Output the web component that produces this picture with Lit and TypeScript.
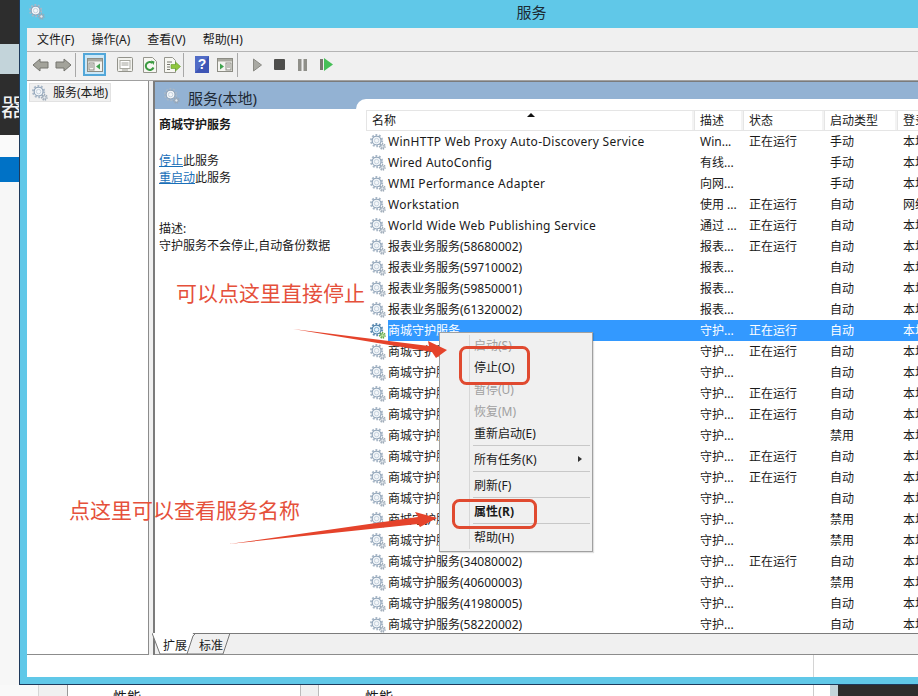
import { LitElement, html, css, svg } from "lit";
import { customElement } from "lit/decorators.js";

const gear = (active = false) => html`<svg class="gear" width="16" height="16" viewBox="0 0 16 16">
  <circle cx="6.6" cy="6.6" r="5.6" fill="none" stroke="${active ? "#5f8fb5" : "#a9b8c8"}" stroke-width="2" stroke-dasharray="1.9 1.6"></circle>
  <circle cx="6.6" cy="6.6" r="4.4" fill="${active ? "#e6f3fb" : "#f3f6f9"}" stroke="${active ? "#4d7ea6" : "#8fa3b8"}" stroke-width="1.1"></circle>
  <circle cx="6.6" cy="6.6" r="2.2" fill="none" stroke="${active ? "#7fb2d6" : "#c6d2de"}" stroke-width="1"></circle>
  <circle cx="12.4" cy="12.4" r="2.6" fill="none" stroke="${active ? "#5aa83c" : "#9aa8b6"}" stroke-width="1.6" stroke-dasharray="1.3 1"></circle>
  <circle cx="12.4" cy="12.4" r="1.6" fill="${active ? "#bfe3a8" : "#e4e9ee"}" stroke="${active ? "#5aa83c" : "#8d9baa"}" stroke-width=".7"></circle>
</svg>`;

const win = (inner: unknown) => html`<svg width="16" height="16" viewBox="0 0 16 16">
  <rect x=".5" y="1.5" width="15" height="13" fill="#f4f4f0" stroke="#8c8c84"></rect>
  <rect x="1" y="2" width="14" height="2.5" fill="#a9a9a0"></rect>
  ${inner}
</svg>`;

const icons: Record<string, unknown> = {
  back: html`<svg width="17" height="16" viewBox="0 0 17 16"><path d="M1 8 8 2v3h8v6H8v3z" fill="#a3a39b" stroke="#75756f"></path></svg>`,
  fwd: html`<svg width="17" height="16" viewBox="0 0 17 16"><path d="M16 8 9 2v3H1v6h8v3z" fill="#a3a39b" stroke="#75756f"></path></svg>`,
  view: win(svg`<rect x="2" y="6" width="5" height="7" fill="none" stroke="#8c8c84"></rect><path d="M3 8h3M3 10h3" stroke="#8c8c84"></path><path d="M13 6.5v6L9 9.5z" fill="#3fa34d"></path>`),
  doc: html`<svg width="16" height="16" viewBox="0 0 16 16"><rect x=".5" y=".5" width="15" height="14" rx="1" fill="#f2f2ee" stroke="#93938b"></rect><rect x="3" y="3.5" width="10" height="8" fill="#fff" stroke="#a9a9a1"></rect><path d="M4.5 6h7M4.5 8h7M5 13h6" stroke="#a0a098"></path></svg>`,
  refresh: html`<svg width="16" height="16" viewBox="0 0 16 16"><path d="M1.500.5h9l4 4v11h-13z" fill="#f7f7f2" stroke="#96968e"></path><path d="M11.500 10.500a4 4 0 1 1-1-4.500" fill="none" stroke="#3b9a41" stroke-width="2"></path><path d="M9 3.500l3.500 1-1 3.500z" fill="#3b9a41"></path></svg>`,
  export: html`<svg width="18" height="16" viewBox="0 0 18 16"><path d="M1.500.5h8l3 3v12h-11z" fill="#f7f7f2" stroke="#96968e"></path><path d="M4 5h5M4 7.500h3M4 10h3M4 12.500h3" stroke="#77776f"></path><path d="M8 7.500h4.500V5l5 4.500-5 4.500v-2.500H8z" fill="#8fc63d" stroke="#5f9a2a" stroke-width=".6"></path></svg>`,
  help: html`<svg width="14" height="17" viewBox="0 0 14 17"><rect width="14" height="17" fill="#3e55b5"></rect><path d="M0 0h14L0 17z" fill="#5f7bd2" opacity=".6"></path><text x="7" y="13" text-anchor="middle" fill="#fff" font-size="14" font-weight="700" font-family="Liberation Sans">?</text></svg>`,
  panel: win(svg`<rect x="9" y="6" width="5" height="7" fill="none" stroke="#8c8c84"></rect><path d="M10 8h3M10 10h3" stroke="#8c8c84"></path><path d="M3 6.500v6l4-3z" fill="#3fa34d"></path>`),
  play: html`<svg width="9" height="14" viewBox="0 0 9 14"><path d="M.5 1v12L8.500 7z" fill="#a9a9a3" stroke="#8a8a84"></path></svg>`,
  stop: html`<svg width="11" height="11" viewBox="0 0 11 11"><rect width="11" height="11" rx="1" fill="#4e4e4c"></rect></svg>`,
  pause: html`<svg width="9" height="12" viewBox="0 0 9 12"><rect width="3.500" height="12" fill="#8f8f89"></rect><rect x="5.500" width="3.500" height="12" fill="#8f8f89"></rect></svg>`,
  resume: html`<svg width="13" height="13" viewBox="0 0 13 13"><rect y="1" width="3" height="11" fill="#77776f"></rect><path d="M4 0v13l9-6.500z" fill="#46bf57"></path></svg>`,
};

type Row = [string, string, string, string, string];
const svc = "商城守护服务";
const rows: Row[] = [
  ["WinHTTP Web Proxy Auto-Discovery Service", "Win...", "正在运行", "手动", "本地服务"],
  ["Wired AutoConfig", "有线...", "", "手动", "本地系统"],
  ["WMI Performance Adapter", "向网...", "", "手动", "本地系统"],
  ["Workstation", "使用 ...", "正在运行", "自动", "网络服务"],
  ["World Wide Web Publishing Service", "通过 ...", "正在运行", "自动", "本地系统"],
  ["报表业务服务(58680002)", "报表...", "正在运行", "自动", "本地系统"],
  ["报表业务服务(59710002)", "报表...", "", "自动", "本地系统"],
  ["报表业务服务(59850001)", "报表...", "", "自动", "本地系统"],
  ["报表业务服务(61320002)", "报表...", "", "自动", "本地系统"],
  [svc, "守护...", "正在运行", "自动", "本地系统"],
  [svc, "守护...", "正在运行", "自动", "本地系统"],
  [svc, "守护...", "", "自动", "本地系统"],
  [svc, "守护...", "正在运行", "自动", "本地系统"],
  [svc, "守护...", "正在运行", "自动", "本地系统"],
  [svc, "守护...", "", "禁用", "本地系统"],
  [svc, "守护...", "正在运行", "自动", "本地系统"],
  [svc, "守护...", "正在运行", "自动", "本地系统"],
  [svc, "守护...", "", "自动", "本地系统"],
  [svc, "守护...", "", "禁用", "本地系统"],
  [svc, "守护...", "", "禁用", "本地系统"],
  ["商城守护服务(34080002)", "守护...", "正在运行", "自动", "本地系统"],
  ["商城守护服务(40600003)", "守护...", "", "禁用", "本地系统"],
  ["商城守护服务(41980005)", "守护...", "", "自动", "本地系统"],
  ["商城守护服务(58220002)", "守护...", "", "自动", "本地系统"],
];

@customElement("app-root")
export class AppRoot extends LitElement {
  static styles = css`
    :host {
      display: block;
      width: 918px;
      height: 696px;
      position: relative;
      overflow: hidden;
      background: #f7f7f7;
      font: 12px/1.2 "Noto Sans", "Noto Sans CJK SC", sans-serif;
      color: #1a1a1a;
    }
    .top { display: flex; height: 685px; }
    .strip { width: 19px; flex: none; display: flex; flex-direction: column; overflow: hidden; background: #f7f7f7; }
    .s-dark { height: 44px; background: #2d2d2d; }
    .s-light { height: 30px; background: #c3d4da; }
    .s-word { height: 61px; background: #2d2d2d; color: #f2f2f2; font-size: 24px; line-height: 66px; padding-left: 1px; white-space: nowrap; }
    .s-white { height: 22px; background: #fafafa; }
    .s-blue { height: 25px; background: #0072c6; }
    .window {
      width: 899px; flex: none; display: flex; flex-direction: column;
      background: #60c8e8; border-left: 1px solid #1e3a5c; border-bottom: 1px solid #1e3a5c;
      padding: 0 0 7px 7px; overflow: hidden;
    }
    .title { height: 28px; box-sizing: border-box; flex: none; position: relative; display: flex; align-items: center; justify-content: center; margin-left: -7px; padding: 0 0 5px 117px; font-size: 15px; color: #1c2b33; }
    .title .gear { position: absolute; left: 9px; top: 4px; }
    .menu { height: 23px; box-sizing: content-box; flex: none; background: #f0f0f0; display: flex; align-items: center; padding-left: 10px; gap: 17px; border-bottom: 1px solid #b4b4b4; }
    .menu span { white-space: nowrap; margin-top: 2px; }
    .toolbar { height: 29px; box-sizing: border-box; flex: none; background: #f0f0f0; display: flex; align-items: center; padding: 0 0 3px 2px; border-bottom: 1px solid #a0a0a0; }
    .btn { width: 23px; height: 23px; flex: none; display: flex; align-items: center; justify-content: center; box-sizing: border-box; }
    .btn.on { background: #cde8f7; border: 2px solid #52a7d9; }
    .sep { width: 1px; height: 24px; background: #a8a8a8; flex: none; }
    .ml7 { margin-left: 7px; } .ml8 { margin-left: 8px; } .ml2 { margin-left: 2px; } .mln1 { margin-left: -1px; } .ml6 { margin-left: 6px; } .ml1 { margin-left: 1px; }
    .main { flex: 1; min-height: 0; display: flex; background: #f0f0f0; }
    .tree { flex: none; background: #fff; border-right: 1px solid #8c8c8c; border-bottom: 1px solid #8c8c8c; padding: 2px; box-sizing: border-box; width: 122px; }
    .tree-item { display: flex; align-items: center; gap: 5px; width: 82px; height: 19px; box-sizing: border-box; padding-left: 2px; background: #f0f0f0; border: 1px solid #e2e2e2; white-space: nowrap; }
    .tree-item span { margin-top: 2px; }
    .right { flex: 1; min-width: 0; margin-left: 4px; display: flex; flex-direction: column; border-left: 2px solid #7b7b7b; border-top: 1px solid #7b7b7b; }
    .rhead { height: 27px; flex: none; background: #93b2d3; display: flex; align-items: center; gap: 8px; padding-left: 9px; font-size: 15px; color: #1f2a36; }
    .rhead span { margin-top: 4px; }
    .rbody { flex: 1; min-height: 0; display: flex; background: #fff; }
    .desc { width: 201px; flex: none; padding: 7px 0 0 4px; box-sizing: border-box; line-height: 17px; }
    .desc b { display: block; font-weight: 700; margin-bottom: 19px; line-height: 17px; }
    .desc a { color: #1a6fb8; text-decoration: underline; }
    .desc .d { margin-top: 34px; }
    .list { flex: 1; min-width: 0; margin-top: -10px; background: #fff; border-top-left-radius: 10px; padding: 11px 0 0 10px; overflow: hidden; position: relative; }
    .hdr, .row { display: grid; grid-template-columns: 328px 49px 81px 73px 200px; white-space: nowrap; }
    .hdr { height: 21px; box-sizing: border-box; border-top: 1px solid #e5e5e5; border-bottom: 1px solid #e5e5e5; position: relative; }
    .hdr span { padding-left: 5px; line-height: 19px; border-left: 1px solid #e5e5e5; border-right: 2px solid #f3f3f3; overflow: hidden; }
    .hdr .sort { position: absolute; left: 161px; top: 2px; width: 0; height: 0; padding: 0; border: 0; border-left: 4px solid transparent; border-right: 4px solid transparent; border-bottom: 4px solid #111; }
    .row { height: 21px; line-height: 21px; }
    .cell { padding-left: 6px; overflow: hidden; }
    .name { display: flex; align-items: center; padding-left: 4px; gap: 2px; }
    .name span { flex: 1; padding-left: 0; }
    .row.latin .name span { letter-spacing: .28px; }
    .row.sel { color: #fff; }
    .row.sel .cell:not(.name), .row.sel .name span { background: #3399ff; }
    .tabs { height: 22px; flex: none; background: #f0f0f0; border-top: 1px solid #7b7b7b; border-bottom: 1px solid #8c8c8c; box-sizing: border-box; display: flex; gap: 12px; padding-left: 8px; line-height: 23px; position: relative; }
    .tabs svg { position: absolute; left: -3px; top: -1px; }
    .tabs span { position: relative; }
    .status { height: 22px; flex: none; background: #fff; display: flex; }
    .status i { display: block; width: 786px; border-right: 1px solid #d4d4d4; }
    .bottom { height: 11px; display: flex; font-size: 14px; line-height: 24px; }
    .b-a { width: 39px; background: #f9f9f9; border-right: 1px solid #d6d6d6; box-sizing: border-box; }
    .b-b { width: 28px; background: #f0f0f0; border-right: 1px solid #999; }
    .b-c { width: 187px; padding-left: 45px; background: #fff; overflow: hidden; border-right: 1px solid #bbb; white-space: nowrap; }
    .b-d { width: 17px; background: #f0f0f0; border-right: 1px solid #bbb; }
    .b-e { width: 448px; padding-left: 46px; background: #fff; overflow: hidden; border-right: 1px solid #ccc; white-space: nowrap; }
    .b-f { width: 16px; background: #fff; }
    .b-g { width: 8px; background: #c3d4da; }
    .b-h { flex: 1; background: #2d2d2d; }
    .ctx { position: absolute; left: 439px; top: 332px; width: 154px; box-sizing: border-box; background: #f0f0f0; border: 1px solid #a0a0a0; padding: 1px 2px 3px; box-shadow: 1px 1px 1px rgba(0,0,0,.12); }
    .ctx::before { content: ""; position: absolute; left: 29px; top: 2px; bottom: 2px; width: 1px; background: #d7d7d7; }
    .it { height: 22px; line-height: 24px; padding-left: 32px; position: relative; white-space: nowrap; }
    .it.dis { color: #a0a0a0; }
    .it.bold { font-weight: 700; }
    .it .more { position: absolute; right: 8px; top: 8px; width: 0; height: 0; border-left: 4px solid #333; border-top: 3.5px solid transparent; border-bottom: 3.5px solid transparent; }
    .ln { height: 4px; margin-left: 31px; box-sizing: border-box; padding-top: 1px; }
    .ln::after { content: ""; display: block; height: 1px; background: #c8c8c8; }
    .note { position: absolute; color: #e5503b; font-size: 21px; line-height: 28px; white-space: nowrap; font-weight: 400; }
    .n1 { left: 176px; top: 279px; }
    .n2 { left: 69px; top: 496px; }
    .ink { position: absolute; left: 0; top: 0; pointer-events: none; }
  `;

  render() {
    const tb = (k: string, cls = "") => html`<div class="btn ${cls}">${icons[k]}</div>`;
    return html`
      <div class="top">
        <div class="strip">
          <div class="s-dark"></div><div class="s-light"></div>
          <div class="s-word">器</div>
          <div class="s-white"></div><div class="s-blue"></div>
        </div>
        <div class="window">
          <div class="title">${gear()}服务</div>
          <div class="menu"><span>文件(F)</span><span>操作(A)</span><span>查看(V)</span><span>帮助(H)</span></div>
          <div class="toolbar">
            ${tb("back")}${tb("fwd")}<div class="sep"></div>
            ${tb("view", "on ml7")}${tb("doc", "ml7")}${tb("refresh", "ml2")}${tb("export", "mln1")}
            <div class="sep"></div>
            ${tb("help", "ml6")}${tb("panel")}<div class="sep ml1"></div>
            ${tb("play", "ml8")}${tb("stop", "mln1")}${tb("pause")}${tb("resume", "ml1")}
          </div>
          <div class="main">
            <div class="tree"><div class="tree-item">${gear()}<span>服务(本地)</span></div></div>
            <div class="right">
              <div class="rhead">${gear()}<span>服务(本地)</span></div>
              <div class="rbody">
                <div class="desc">
                  <b>商城守护服务</b>
                  <div><a>停止</a>此服务</div>
                  <div><a>重启动</a>此服务</div>
                  <div class="d">描述:</div>
                  <div>守护服务不会停止,自动备份数据</div>
                </div>
                <div class="list">
                  <div class="hdr"><span>名称</span><span>描述</span><span>状态</span><span>启动类型</span><span>登录为</span><i class="sort"></i></div>
                  ${rows.map((r, i) => html`<div class="row ${i === 9 ? "sel" : ""} ${i < 5 ? "latin" : ""}">
                    <div class="cell name">${gear(i === 9)}<span>${r[0]}</span></div>
                    <div class="cell">${r[1]}</div><div class="cell">${r[2]}</div><div class="cell">${r[3]}</div><div class="cell">${r[4]}</div>
                  </div>`)}
                </div>
              </div>
              <div class="tabs">
                <svg width="90" height="22" viewBox="0 0 90 22"><path d="M0 0 8 21H35L41 0" fill="#fff"></path><path d="M0 0 8 21H35L41 3 44 0H78L71 21H35" fill="none" stroke="#777"></path></svg>
                <span>扩展</span><span>标准</span>
              </div>
            </div>
          </div>
          <div class="status"><i></i></div>
        </div>
      </div>
      <div class="bottom">
        <div class="b-a"></div><div class="b-b"></div><div class="b-c">性能</div><div class="b-d"></div><div class="b-e">性能</div><div class="b-f"></div><div class="b-g"></div><div class="b-h"></div>
      </div>

      <div class="ctx">
        <div class="it dis">启动(S)</div>
        <div class="it">停止(O)</div>
        <div class="it dis">暂停(U)</div>
        <div class="it dis">恢复(M)</div>
        <div class="it">重新启动(E)</div>
        <div class="ln"></div>
        <div class="it">所有任务(K)<i class="more"></i></div>
        <div class="ln"></div>
        <div class="it">刷新(F)</div>
        <div class="ln"></div>
        <div class="it bold">属性(R)</div>
        <div class="ln"></div>
        <div class="it">帮助(H)</div>
      </div>

      <div class="note n1">可以点这里直接停止</div>
      <div class="note n2">点这里可以查看服务名称</div>
      <svg class="ink" width="918" height="696" viewBox="0 0 918 696">
        <path d="M293 329 429 346 428 341 447 350 436 358 432 352z" fill="#e5432b"></path>
        <path d="M229 544 418 517 415 512 437 518 420 527 418 524z" fill="#e5432b"></path>
        <rect x="460.500" y="347.500" width="68" height="36" rx="6" fill="none" stroke="#e04a30" stroke-width="3"></rect>
        <rect x="453.500" y="500.500" width="82" height="27" rx="6" fill="none" stroke="#e04a30" stroke-width="3"></rect>
      </svg>
    `;
  }
}
